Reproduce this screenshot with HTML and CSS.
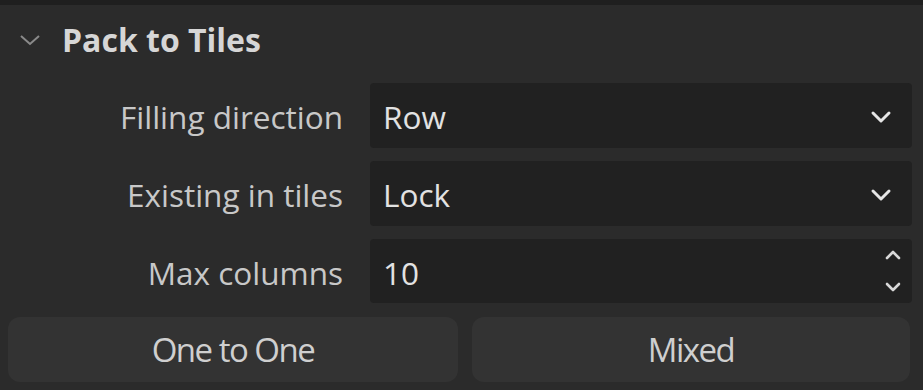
FILE: index.html
```html
<!DOCTYPE html>
<html lang="en">
<head>
    <meta charset="UTF-8">
    <title>Pack to Tiles</title>
    <link rel="stylesheet" href="styles.css">
</head>
<body>
    <div class="top-strip"></div>
    <div class="panel">
        <div class="panel-header">
            <svg class="collapse-icon" width="22" height="14" viewBox="0 0 22 14">
                <path d="M2 3 L11 11 L20 3" fill="none" stroke="#8a8a8a" stroke-width="2"/>
            </svg>
            <span class="panel-title">Pack to Tiles</span>
        </div>

        <div class="fields">
            <label class="field-label">Filling direction</label>
            <div class="field select">
                <span>Row</span>
                <svg width="22" height="14" viewBox="0 0 22 14">
                    <path d="M3 3 L11 11 L19 3" fill="none" stroke="#e6e6e6" stroke-width="3" stroke-linecap="round" stroke-linejoin="round"/>
                </svg>
            </div>

            <label class="field-label">Existing in tiles</label>
            <div class="field select">
                <span>Lock</span>
                <svg width="22" height="14" viewBox="0 0 22 14">
                    <path d="M3 3 L11 11 L19 3" fill="none" stroke="#e6e6e6" stroke-width="3" stroke-linecap="round" stroke-linejoin="round"/>
                </svg>
            </div>

            <label class="field-label">Max columns</label>
            <div class="field number">
                <span>10</span>
                <div class="spinner">
                    <svg width="18" height="12" viewBox="0 0 18 12">
                        <path d="M3 9 L9 3 L15 9" fill="none" stroke="#d8d8d8" stroke-width="2.6" stroke-linecap="round" stroke-linejoin="round"/>
                    </svg>
                    <svg width="18" height="12" viewBox="0 0 18 12">
                        <path d="M3 3 L9 9 L15 3" fill="none" stroke="#d8d8d8" stroke-width="2.6" stroke-linecap="round" stroke-linejoin="round"/>
                    </svg>
                </div>
            </div>
        </div>

        <div class="actions">
            <button class="action-btn">One to One</button>
            <button class="action-btn">Mixed</button>
        </div>
    </div>
</body>
</html>
```

FILE: styles.css
```css
body {
    margin: 0;
    background-color: #2b2b2b;
    font-family: 'Open Sans', 'Noto Sans', sans-serif;
    color: #d0d0d0;
    width: 923px;
    height: 390px;
    overflow: hidden;
}

.top-strip {
    height: 5px;
    background-color: #1f1f1f;
}

.panel {
    display: flex;
    flex-direction: column;
}

.panel-header {
    display: flex;
    align-items: center;
    height: 68px;
    padding-left: 19px;
}

.collapse-icon {
    margin-right: 21px;
    margin-top: 2px;
}

.panel-title {
    font-size: 32px;
    font-weight: 700;
    color: #d6d6d6;
}

.fields {
    display: grid;
    grid-template-columns: 343px 1fr;
    column-gap: 27px;
    row-gap: 13px;
    padding-top: 10px;
    padding-right: 11px;
}

.field-label {
    display: flex;
    align-items: center;
    justify-content: flex-end;
    font-size: 31.5px;
    color: #c8c8c8;
    padding-top: 2px;
}

.field {
    display: flex;
    align-items: center;
    justify-content: space-between;
    height: 65px;
    background-color: #212121;
    border-radius: 4px;
    padding: 2px 20px 0 13px;
    box-sizing: border-box;
    font-size: 31.5px;
    color: #e2e2e2;
}

.field.number {
    height: 64px;
    padding-right: 10px;
}

.spinner {
    display: flex;
    flex-direction: column;
    gap: 20px;
    margin-top: -2px;
}

.actions {
    display: grid;
    grid-template-columns: 450px 438px;
    column-gap: 14px;
    padding: 14px 0 0 8px;
}

.action-btn {
    height: 65px;
    background-color: #333333;
    border: none;
    border-radius: 12px;
    font-family: 'Open Sans', 'Noto Sans', sans-serif;
    font-size: 33px;
    color: #cfcfcf;
    letter-spacing: -1.5px;
    cursor: pointer;
}
```
